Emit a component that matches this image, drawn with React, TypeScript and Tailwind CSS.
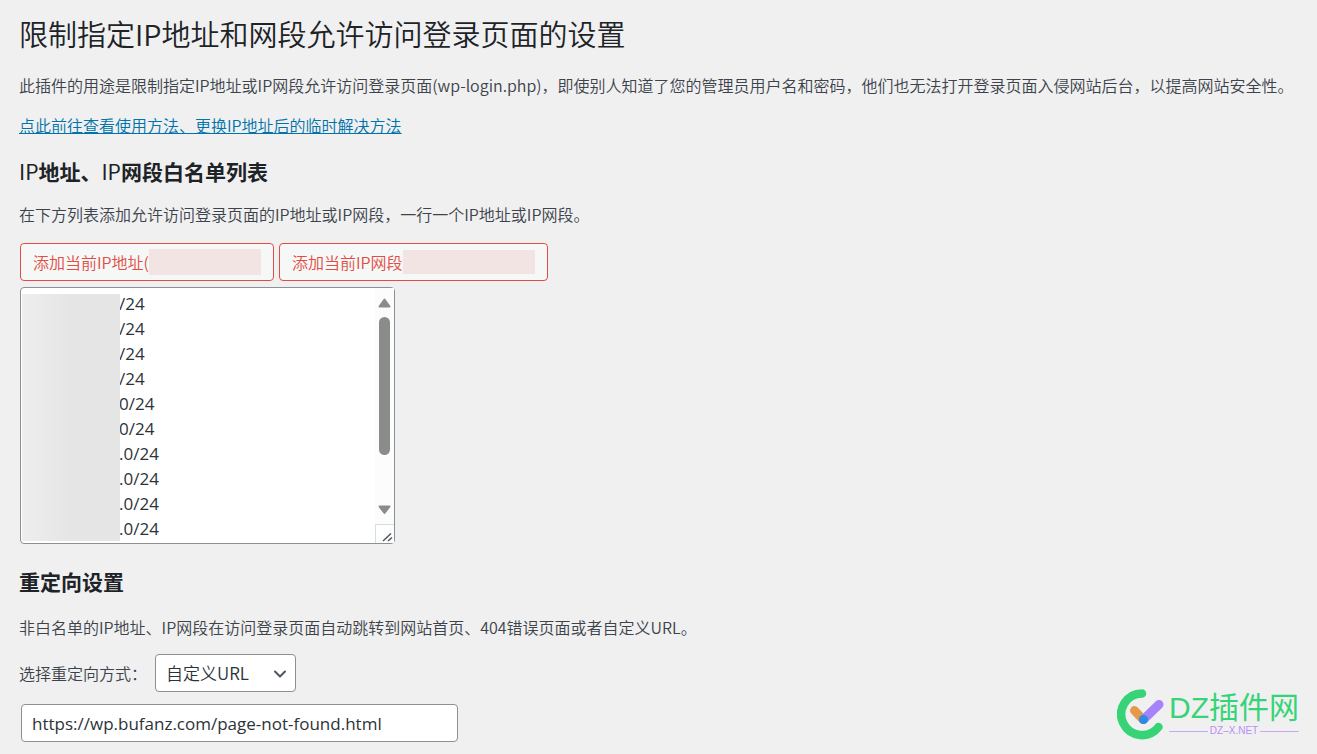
import React, { useState } from "react";
import { ChevronDown } from "lucide-react";

const initialList = [
  "/24",
  "/24",
  "/24",
  "/24",
  "0/24",
  "0/24",
  ".0/24",
  ".0/24",
  ".0/24",
  ".0/24",
].join("\n");

function ScrollBar() {
  return (
    <svg
      className="absolute right-px top-px h-[255px] w-[19px] pointer-events-none"
      viewBox="0 0 19 255"
      aria-hidden="true"
    >
      <rect width="19" height="255" fill="#fcfcfc" />
      <path
        d="M9.5 11.5 L14.5 18.5 H4.5 Z"
        fill="#8a8c8a"
        stroke="#8a8c8a"
        strokeWidth="2"
        strokeLinejoin="round"
      />
      <rect x="4" y="29" width="11" height="138" rx="5.5" fill="#8a8c8a" />
      <path
        d="M9.5 225 L14.5 218.5 H4.5 Z"
        fill="#8a8c8a"
        stroke="#8a8c8a"
        strokeWidth="2"
        strokeLinejoin="round"
      />
      <path d="M0.5 255 V236.5 H19" fill="#fff" stroke="#cfe3d8" />
      <path d="M8 253 L16 245.5 M13 253 L17 249.5" stroke="#50575e" strokeWidth="1.5" />
    </svg>
  );
}

function Logo() {
  return (
    <div className="absolute bottom-3.5 right-[18px] flex items-center gap-1">
      <svg className="h-[52px] w-12" viewBox="0 0 48 52" fill="none" aria-hidden="true">
        <path
          d="M25 5.5 A20.8 20.8 0 1 0 41.5 39"
          stroke="#37d477"
          strokeWidth="8.5"
          strokeLinecap="round"
        />
        <path d="M17.5 22.5 L25.5 31" stroke="#e59a48" strokeWidth="9" strokeLinecap="round" />
        <path d="M26.5 31.5 L42 16.5" stroke="#a682fb" strokeWidth="9" strokeLinecap="round" />
        <circle cx="26.5" cy="31.5" r="4.6" fill="#2a8de0" />
      </svg>
      <div className="font-['Liberation_Sans','Noto_Sans_CJK_SC',sans-serif] font-normal">
        <div className="text-[30px] leading-[34px] text-[#37d477]">DZ插件网</div>
        <div className="flex items-center gap-0.5 text-[10px] leading-3 text-[#b78ef5]">
          <span className="h-px flex-1 bg-[#c9a8f5]" />
          DZ–X.NET
          <span className="h-px flex-1 bg-[#c9a8f5]" />
        </div>
      </div>
    </div>
  );
}

export default function App() {
  const [list, setList] = useState(initialList);
  const [mode, setMode] = useState("custom");
  const [url, setUrl] = useState("https://wp.bufanz.com/page-not-found.html");

  return (
    <main className="relative min-h-screen bg-[#f0f0f1] pl-[19px] pr-2 pt-3.5 pb-3 font-['Noto_Sans_CJK_SC',sans-serif] text-base font-[350] leading-6 text-[#3c434a]">
      <h1 className="text-[29px] leading-[38px] text-[#1d2327]">
        限制指定IP地址和网段允许访问登录页面的设置
      </h1>

      <p className="mt-[21px]">
        此插件的用途是限制指定IP地址或IP网段允许访问登录页面(wp-login.php)，即使别人知道了您的管理员用户名和密码，他们也无法打开登录页面入侵网站后台，以提高网站安全性。
      </p>
      <p className="mt-4">
        <a href="#usage" className="text-[#0073aa] underline">
          点此前往查看使用方法、更换IP地址后的临时解决方法
        </a>
      </p>

      <h2 className="mt-5 text-[21px] font-bold leading-7 text-[#1d2327]">
        <span className="font-normal">IP</span>地址、<span className="font-normal">IP</span>
        网段白名单列表
      </h2>
      <p className="mt-[17px]">
        <label htmlFor="ip-list">
          在下方列表添加允许访问登录页面的IP地址或IP网段，一行一个IP地址或IP网段。
        </label>
      </p>

      <div className="ml-px mt-[17px] flex gap-[5px]">
        <button
          type="button"
          className="flex h-[38px] w-[254px] items-center rounded-[4px] border border-[#e14d43] bg-[#f6f7f7] px-3 text-[#e14d43]"
        >
          添加当前IP地址(
          <span className="h-[26px] flex-1 bg-[#f3e4e4]" />
        </button>
        <button
          type="button"
          className="flex h-[38px] w-[269px] items-center rounded-[4px] border border-[#e14d43] bg-[#f6f7f7] px-3 text-[#e14d43]"
        >
          添加当前IP网段
          <span className="h-6 flex-1 bg-[#f3e4e4]" />
        </button>
      </div>

      <div className="relative ml-px mt-1.5 w-[375px]">
        <textarea
          id="ip-list"
          rows={10}
          value={list}
          onChange={(e) => setList(e.target.value)}
          className="block h-[257px] w-full resize-none overflow-hidden rounded-[4px] border border-[#8c8f94] bg-white py-[3px] pl-[98px] pr-5 font-['Open_Sans',sans-serif] text-[17px] font-normal leading-[25px] text-[#2c3338]"
        />
        <div className="absolute left-0.5 top-[7px] h-[247px] w-[98px] bg-linear-to-r from-[#eeeeee] to-[#e5e5e5] to-50%" />
        <ScrollBar />
      </div>

      <h2 className="mt-[23px] text-[21px] font-bold leading-7 text-[#1d2327]">重定向设置</h2>
      <p className="mt-5">
        非白名单的IP地址、IP网段在访问登录页面自动跳转到网站首页、404错误页面或者自定义URL。
      </p>

      <div className="mt-[15px] flex items-center">
        <label htmlFor="redirect-mode" className="w-[136px]">
          选择重定向方式：
        </label>
        <div className="relative">
          <select
            id="redirect-mode"
            value={mode}
            onChange={(e) => setMode(e.target.value)}
            className="block h-[38px] w-[141px] appearance-none rounded-[4px] border border-[#8c8f94] bg-white pl-2.5 pr-8 text-[17px] text-[#2c3338]"
          >
            <option value="custom">自定义URL</option>
            <option value="home">网站首页</option>
            <option value="404">404错误页面</option>
          </select>
          <ChevronDown
            className="pointer-events-none absolute right-1.5 top-2.5 h-5 w-5 text-[#50575e]"
            strokeWidth={2.5}
          />
        </div>
      </div>

      <input
        type="text"
        aria-label="自定义URL"
        value={url}
        onChange={(e) => setUrl(e.target.value)}
        className="ml-0.5 mt-3 block h-[38px] w-[437px] rounded-[4px] border border-[#8c8f94] bg-white px-2.5 font-['Open_Sans',sans-serif] text-[17px] font-normal text-[#2c3338]"
      />

      <Logo />
    </main>
  );
}
